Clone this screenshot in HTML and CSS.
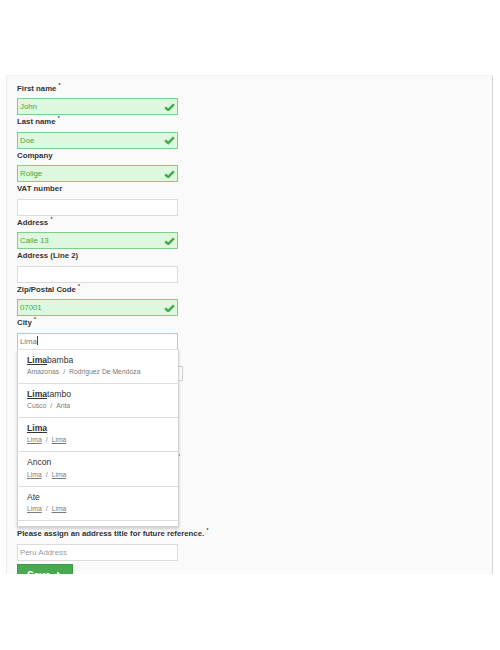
FILE: index.html
```html
<!DOCTYPE html>
<html lang="en">
<head>
<meta charset="utf-8">
<title>Address</title>
<link rel="stylesheet" href="styles.css">
</head>
<body>
<div class="panel">
  <form class="form">
    <div class="field">
      <label class="label">First name <sup>*</sup></label>
      <div class="input valid">John<svg class="check" viewBox="0 0 12 9"><path d="M1.3 4.6 L4.6 7.6 L10.8 1.4"/></svg></div>
    </div>
    <div class="field">
      <label class="label">Last name <sup>*</sup></label>
      <div class="input valid">Doe<svg class="check" viewBox="0 0 12 9"><path d="M1.3 4.6 L4.6 7.6 L10.8 1.4"/></svg></div>
    </div>
    <div class="field">
      <label class="label">Company</label>
      <div class="input valid">Rolige<svg class="check" viewBox="0 0 12 9"><path d="M1.3 4.6 L4.6 7.6 L10.8 1.4"/></svg></div>
    </div>
    <div class="field">
      <label class="label">VAT number</label>
      <div class="input"></div>
    </div>
    <div class="field">
      <label class="label">Address <sup>*</sup></label>
      <div class="input valid">Calle 13<svg class="check" viewBox="0 0 12 9"><path d="M1.3 4.6 L4.6 7.6 L10.8 1.4"/></svg></div>
    </div>
    <div class="field">
      <label class="label">Address (Line 2)</label>
      <div class="input"></div>
    </div>
    <div class="field">
      <label class="label">Zip/Postal Code <sup>*</sup></label>
      <div class="input valid">07001<svg class="check" viewBox="0 0 12 9"><path d="M1.3 4.6 L4.6 7.6 L10.8 1.4"/></svg></div>
    </div>
    <div class="field city">
      <label class="label">City <sup>*</sup></label>
      <div class="input focus">Lima<span class="caret"></span></div>
      <ul class="dropdown">
        <li class="item">
          <div class="title"><b>Lima</b>bamba</div>
          <div class="sub">Amazonas<span class="sep">/</span>Rodriguez De Mendoza</div>
        </li>
        <li class="item">
          <div class="title"><b>Lima</b>tambo</div>
          <div class="sub">Cusco<span class="sep">/</span>Anta</div>
        </li>
        <li class="item">
          <div class="title"><b>Lima</b></div>
          <div class="sub"><u>Lima</u><span class="sep">/</span><u>Lima</u></div>
        </li>
        <li class="item">
          <div class="title">Ancon</div>
          <div class="sub"><u>Lima</u><span class="sep">/</span><u>Lima</u></div>
        </li>
        <li class="item">
          <div class="title">Ate</div>
          <div class="sub"><u>Lima</u><span class="sep">/</span><u>Lima</u></div>
        </li>
        <li class="item"></li>
      </ul>
    </div>
    <div class="under">
      <div class="label-space"></div>
      <div class="input select"></div>
      <div class="label-space"></div>
      <div class="input textarea"></div>
      <p class="note"><sup>*</sup></p>
    </div>
    <div class="field">
      <label class="label">Please assign an address title for future reference. <sup>*</sup></label>
      <div class="input placeholder">Peru Address</div>
    </div>
    <button type="button" class="btn">Save<svg class="chev" viewBox="0 0 7 10"><path d="M1.5 1.2 L5.2 5 L1.5 8.8"/></svg></button>
  </form>
</div>
</body>
</html>
```
FILE: styles.css
```css
html, body {
  margin: 0;
  padding: 0;
  background: #ffffff;
}

body {
  font-family: "Liberation Sans", Arial, sans-serif;
  color: #333333;
}

.panel {
  box-sizing: border-box;
  margin: 75px 0 0 6px;
  width: 487px;
  height: 499px;
  background: #fafafa;
  border-top: 1px solid #f3f3f3;
  border-left: 1px solid #ededed;
  border-right: 1px solid #d6d6d6;
  padding: 5.5px 10px 0;
  overflow: hidden;
}

.form {
  margin: 0;
}

.field {
  position: relative;
}

.label {
  display: block;
  font-size: 7.8px;
  font-weight: bold;
  color: #333333;
  line-height: 14px;
  height: 14px;
  margin-bottom: 2.5px;
  white-space: nowrap;
}

.label-space {
  height: 16.5px;
}

.label sup,
.note sup {
  font-size: 5px;
  line-height: 0;
  vertical-align: 4px;
  font-weight: bold;
}

.input {
  position: relative;
  box-sizing: border-box;
  width: 161px;
  height: 17px;
  border: 1px solid #dcdcdc;
  background: #ffffff;
  font-size: 7.8px;
  line-height: 15px;
  padding: 0 2px;
  color: #555555;
  white-space: nowrap;
}

.input.valid {
  background: #ddf8de;
  border-color: #80cf86;
  color: #3ea94a;
}

.input.focus {
  border-color: #9fcbef;
  color: #777777;
}

.input.placeholder {
  color: #9a9a9a;
}

.caret {
  display: inline-block;
  width: 1px;
  height: 9px;
  background: #444444;
  vertical-align: -1px;
}

.check {
  position: absolute;
  right: 2.5px;
  top: 3.5px;
  width: 11px;
  height: 8.5px;
  fill: none;
  stroke: #3ea84a;
  stroke-width: 2.6;
}

.dropdown {
  position: absolute;
  left: 0;
  top: 32.5px;
  z-index: 2;
  box-sizing: border-box;
  width: 162px;
  height: 178px;
  margin: 0;
  padding: 0;
  list-style: none;
  background: #ffffff;
  border: 1px solid #d2d2d2;
  border-top-color: #e2e2e2;
  box-shadow: 0 2px 3px rgba(0, 0, 0, 0.18);
  overflow: hidden;
}

.item {
  box-sizing: border-box;
  height: 34.3px;
  padding: 4px 9px 0;
  border-bottom: 1px solid #dedede;
}

.title {
  font-size: 8.6px;
  line-height: 12px;
  color: #333333;
}

.title b {
  text-decoration: underline;
}

.sub {
  margin-top: 1.3px;
  font-size: 6.8px;
  line-height: 10px;
  color: #7a7a7a;
  white-space: nowrap;
}

.sub u {
  text-decoration: underline;
}

.sep {
  margin: 0 4px;
}

.under {
  height: 177.5px;
  overflow: hidden;
}

.input.select {
  width: 166px;
  height: 15px;
  margin-bottom: 1.5px;
  border-color: #cfcfcf;
}

.input.textarea {
  height: 47.5px;
}

.note {
  margin: 6px 0 0 161px;
  font-size: 7.7px;
  line-height: 14px;
  color: #777777;
}

.btn {
  display: inline-flex;
  align-items: center;
  gap: 6px;
  box-sizing: border-box;
  margin-top: 3.5px;
  height: 22px;
  width: 56px;
  padding: 0 9px;
  background: #47aa50;
  border: 1px solid #3b9a44;
  border-radius: 0;
  color: #ffffff;
  font-family: "Liberation Sans", Arial, sans-serif;
  font-size: 10px;
  font-weight: bold;
}

.chev {
  width: 6px;
  height: 9px;
  fill: none;
  stroke: #ffffff;
  stroke-width: 2;
}
```
